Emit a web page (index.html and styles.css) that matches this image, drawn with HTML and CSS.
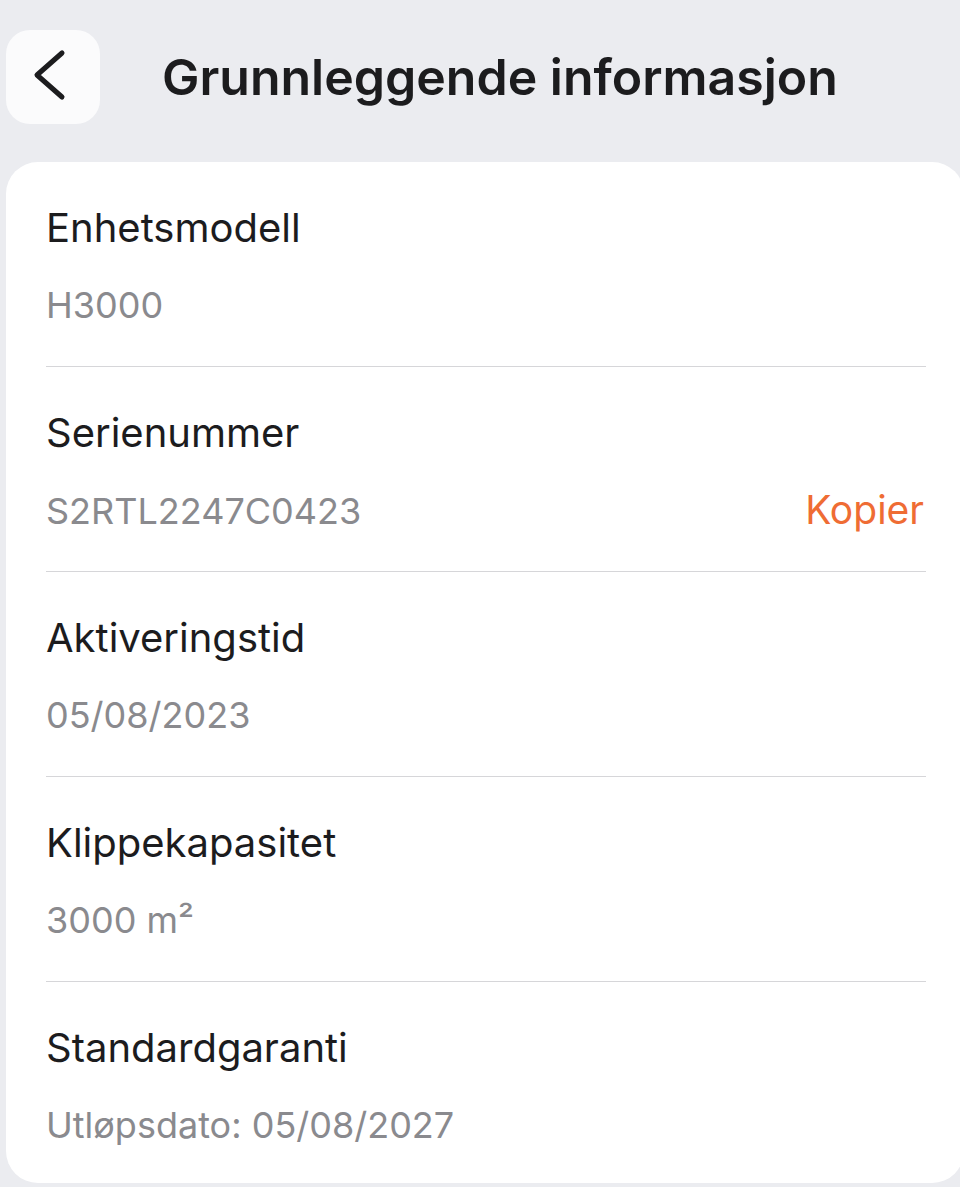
FILE: index.html
```html
<!DOCTYPE html>
<html lang="no">
<head>
  <meta charset="UTF-8">
  <title>Grunnleggende informasjon</title>
  <link rel="stylesheet" href="styles.css">
</head>
<body>

<div class="screen">
  <div class="header">
    <button class="back-btn" aria-label="Tilbake">
      <svg width="94" height="94" viewBox="0 0 94 94">
        <polyline points="56,23 31,45 56,67" fill="none" stroke="#1c1c1e" stroke-width="5" stroke-linecap="round" stroke-linejoin="round"/>
      </svg>
    </button>
    <h1>Grunnleggende informasjon</h1>
  </div>

  <div class="card">
    <div class="row">
      <div class="label">Enhetsmodell</div>
      <div class="value">H3000</div>
    </div>
    <div class="row">
      <div class="label">Serienummer</div>
      <div class="value">
        <span>S2RTL2247C0423</span>
        <span class="copy">Kopier</span>
      </div>
    </div>
    <div class="row">
      <div class="label">Aktiveringstid</div>
      <div class="value">05/08/2023</div>
    </div>
    <div class="row">
      <div class="label">Klippekapasitet</div>
      <div class="value">3000 m²</div>
    </div>
    <div class="row">
      <div class="label">Standardgaranti</div>
      <div class="value">Utløpsdato: 05/08/2027</div>
    </div>
  </div>
</div>

</body>
</html>
```

FILE: styles.css
```css
html, body {
  margin: 0;
  height: 100%;
}

body {
  font-family: Inter, "Noto Sans", sans-serif;
  background: #ebecf0;
  color: #1c1c1e;
  overflow: hidden;
}

.screen {
  padding-top: 30px;
}

.header {
  display: flex;
  align-items: center;
  padding-left: 6px;
}

.back-btn {
  width: 94px;
  height: 94px;
  padding: 0;
  border: none;
  border-radius: 24px;
  background: #fbfbfc;
  display: flex;
  align-items: center;
  justify-content: center;
}

.header h1 {
  margin: 0 0 0 62px;
  font-size: 50px;
  font-weight: 600;
}

.card {
  margin: 38px -4px 0 6px;
  background: #fff;
  border-radius: 32px;
  padding: 0 38px 0 40px;
}

.row {
  padding: 42px 0 39px;
  border-bottom: 1px solid #d6d6d9;
}

.row:last-child {
  border-bottom: none;
  padding-bottom: 36px;
}

.label {
  font-size: 40px;
  line-height: 48px;
}

.value {
  height: 44px;
  margin-top: 31px;
  font-size: 36px;
  line-height: 44px;
  color: #8a8a8e;
  display: flex;
  justify-content: space-between;
  align-items: baseline;
}

.copy {
  font-size: 39px;
  line-height: 44px;
  padding-right: 2px;
  color: #ef6c34;
}
```
